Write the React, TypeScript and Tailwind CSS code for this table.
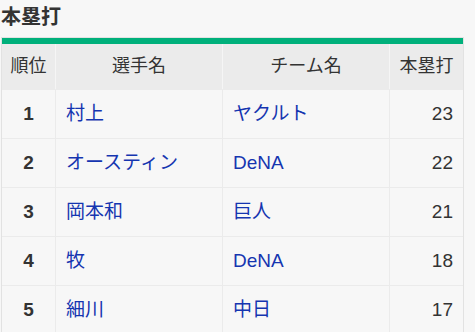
const rows = [
  { rank: 1, name: "村上", team: "ヤクルト", hr: 23 },
  { rank: 2, name: "オースティン", team: "DeNA", hr: 22 },
  { rank: 3, name: "岡本和", team: "巨人", hr: 21 },
  { rank: 4, name: "牧", team: "DeNA", hr: 18 },
  { rank: 5, name: "細川", team: "中日", hr: 17 },
]

export default function App() {
  return (
    <div
      className="min-h-screen bg-[#f7f7f7] text-[#333]"
      style={{ fontFamily: '"Liberation Sans", "Noto Sans CJK JP", sans-serif' }}
    >
      {/* Title */}
      <h2 className="text-[20px] font-bold leading-[28px] pt-[3px] pl-[1px] mb-[6px]">本塁打</h2>

      {/* Ranking table */}
      <div className="ml-[1px] w-[463px] border border-[#e2e2e2] border-b-0">
        <div className="h-[6px] bg-[#00b07b]" />
        <div className="grid grid-cols-[54px_167px_167px_1fr] text-[19px]">
          <div className="h-[45px] bg-[#ebebeb] text-[18px] flex items-center justify-center border-r border-[#f5f5f5]">順位</div>
          <div className="h-[45px] bg-[#ebebeb] text-[18px] flex items-center justify-center border-r border-[#f5f5f5]">選手名</div>
          <div className="h-[45px] bg-[#ebebeb] text-[18px] flex items-center justify-center border-r border-[#f5f5f5]">チーム名</div>
          <div className="h-[45px] bg-[#ebebeb] text-[18px] flex items-center justify-center">本塁打</div>

          {rows.map((r) => (
            <div key={r.rank} className="contents">
              <div className="h-[49px] flex items-center justify-center font-bold border-t border-r border-[#ebebeb]">{r.rank}</div>
              <div className="h-[49px] flex items-center pl-[10px] text-[#1535b0] border-t border-r border-[#ebebeb]">{r.name}</div>
              <div className="h-[49px] flex items-center pl-[10px] text-[#1535b0] border-t border-r border-[#ebebeb]">{r.team}</div>
              <div className="h-[49px] flex items-center justify-end pr-[10px] border-t border-[#ebebeb]">{r.hr}</div>
            </div>
          ))}
        </div>
      </div>
    </div>
  )
}
